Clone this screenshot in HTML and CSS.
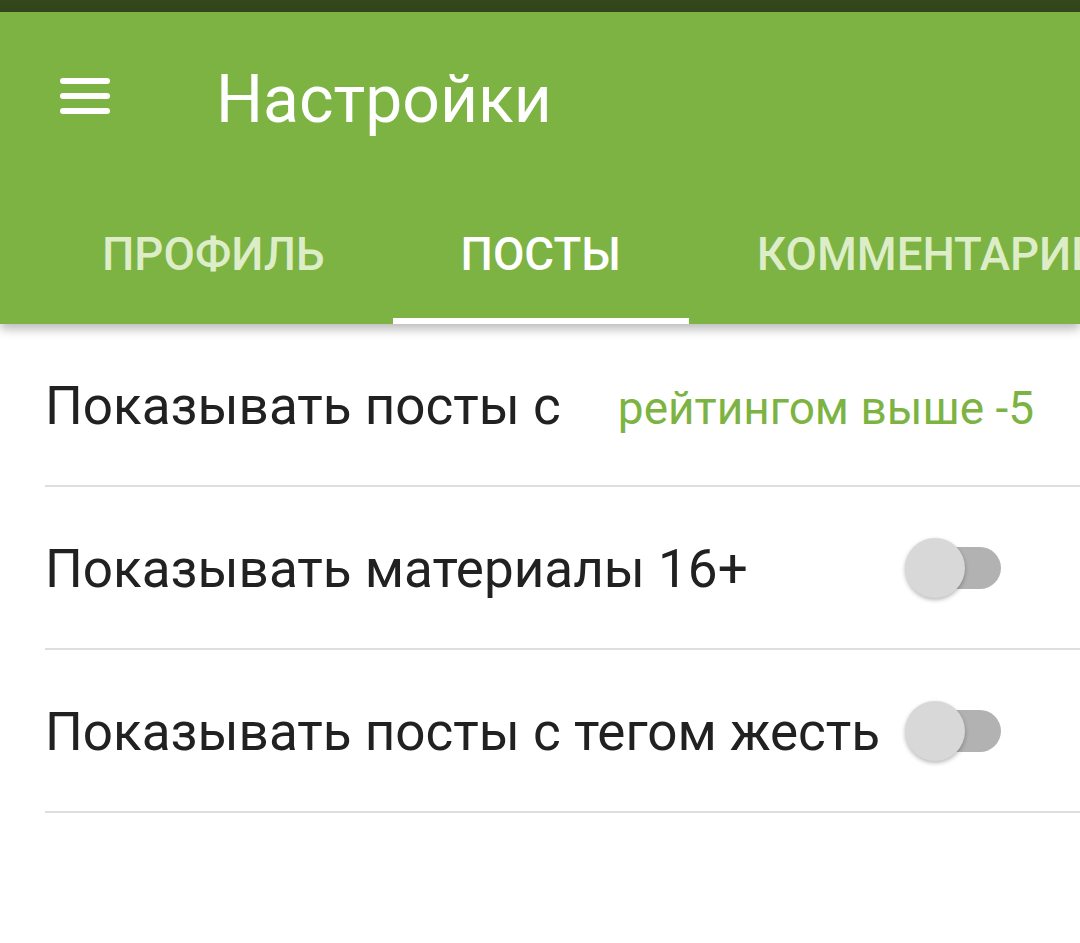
FILE: index.html
```html
<!DOCTYPE html>
<html lang="ru">
<head>
<meta charset="utf-8">
<title>Настройки</title>
<link rel="stylesheet" href="styles.css">
</head>
<body>
<div class="statusbar"></div>
<header class="appbar">
  <div class="toolbar">
    <button class="menu" aria-label="Меню">
      <svg width="50" height="36" viewBox="0 0 50 36"><g stroke="#fff" stroke-width="6" stroke-linecap="round"><line x1="3" y1="3" x2="47" y2="3"/><line x1="3" y1="18" x2="47" y2="18"/><line x1="3" y1="33" x2="47" y2="33"/></g></svg>
    </button>
    <h1 class="title">Настройки</h1>
  </div>
  <nav class="tabs">
    <div class="tab">Профиль</div>
    <div class="tab active">Посты</div>
    <div class="tab">Комментарии</div>
  </nav>
</header>
<main class="list">
  <div class="row">
    <span class="label">Показывать посты с</span>
    <span class="value">рейтингом выше -5</span>
  </div>
  <div class="row switch-row">
    <span class="label">Показывать материалы 16+</span>
    <span class="switch"><span class="thumb"></span><span class="track"></span></span>
  </div>
  <div class="row switch-row">
    <span class="label">Показывать посты с тегом жесть</span>
    <span class="switch"><span class="thumb"></span><span class="track"></span></span>
  </div>
</main>
</body>
</html>
```
FILE: styles.css
```css
html, body {
  margin: 0;
  padding: 0;
  background: #ffffff;
}
body {
  width: 1080px;
  height: 943px;
  overflow: hidden;
  font-family: Roboto, "Noto Sans", "Liberation Sans", sans-serif;
}
.statusbar {
  height: 12px;
  background: #34471c;
}
.appbar {
  background: #7cb342;
  box-shadow: 0 5px 10px rgba(0, 0, 0, 0.28);
}
.toolbar {
  height: 168px;
  display: flex;
  align-items: center;
}
.menu {
  border: 0;
  background: none;
  padding: 0;
  margin: 0 0 0 60px;
  width: 50px;
  height: 36px;
  display: flex;
}
.title {
  margin: 0 0 0 106px;
  font-weight: 400;
  font-size: 66px;
  line-height: 1;
  color: #ffffff;
  padding-top: 8px;
}
.tabs {
  height: 144px;
  display: flex;
  padding-left: 34px;
  overflow: hidden;
  white-space: nowrap;
}
.tab {
  flex-shrink: 0;
  padding: 4px 68px 0;
  display: flex;
  align-items: center;
  justify-content: center;
  font-size: 45.6px;
  font-weight: 500;
  text-transform: uppercase;
  color: #dcedc8;
}
.tab.active {
  color: #ffffff;
  box-shadow: inset 0 -6px 0 #ffffff;
}
.list {
  padding-left: 45px;
}
.row {
  height: 161px;
  border-bottom: 2px solid #dedede;
  display: flex;
  align-items: center;
  justify-content: space-between;
  padding-right: 46px;
  box-sizing: content-box;
}
.label {
  font-size: 53px;
  color: #212121;
  padding-top: 3px;
}
.value {
  font-size: 46px;
  color: #7cb342;
  padding-top: 6px;
}
.switch-row {
  padding-right: 79px;
}
.switch {
  display: flex;
  align-items: center;
}
.thumb {
  width: 60px;
  height: 60px;
  border-radius: 50%;
  background: #d8d8d8;
  box-shadow: 0 2px 4px rgba(0, 0, 0, 0.28);
  position: relative;
  z-index: 1;
}
.track {
  width: 66px;
  height: 42px;
  margin-left: -30px;
  border-radius: 0 21px 21px 0;
  background: #b2b2b2;
}
```
